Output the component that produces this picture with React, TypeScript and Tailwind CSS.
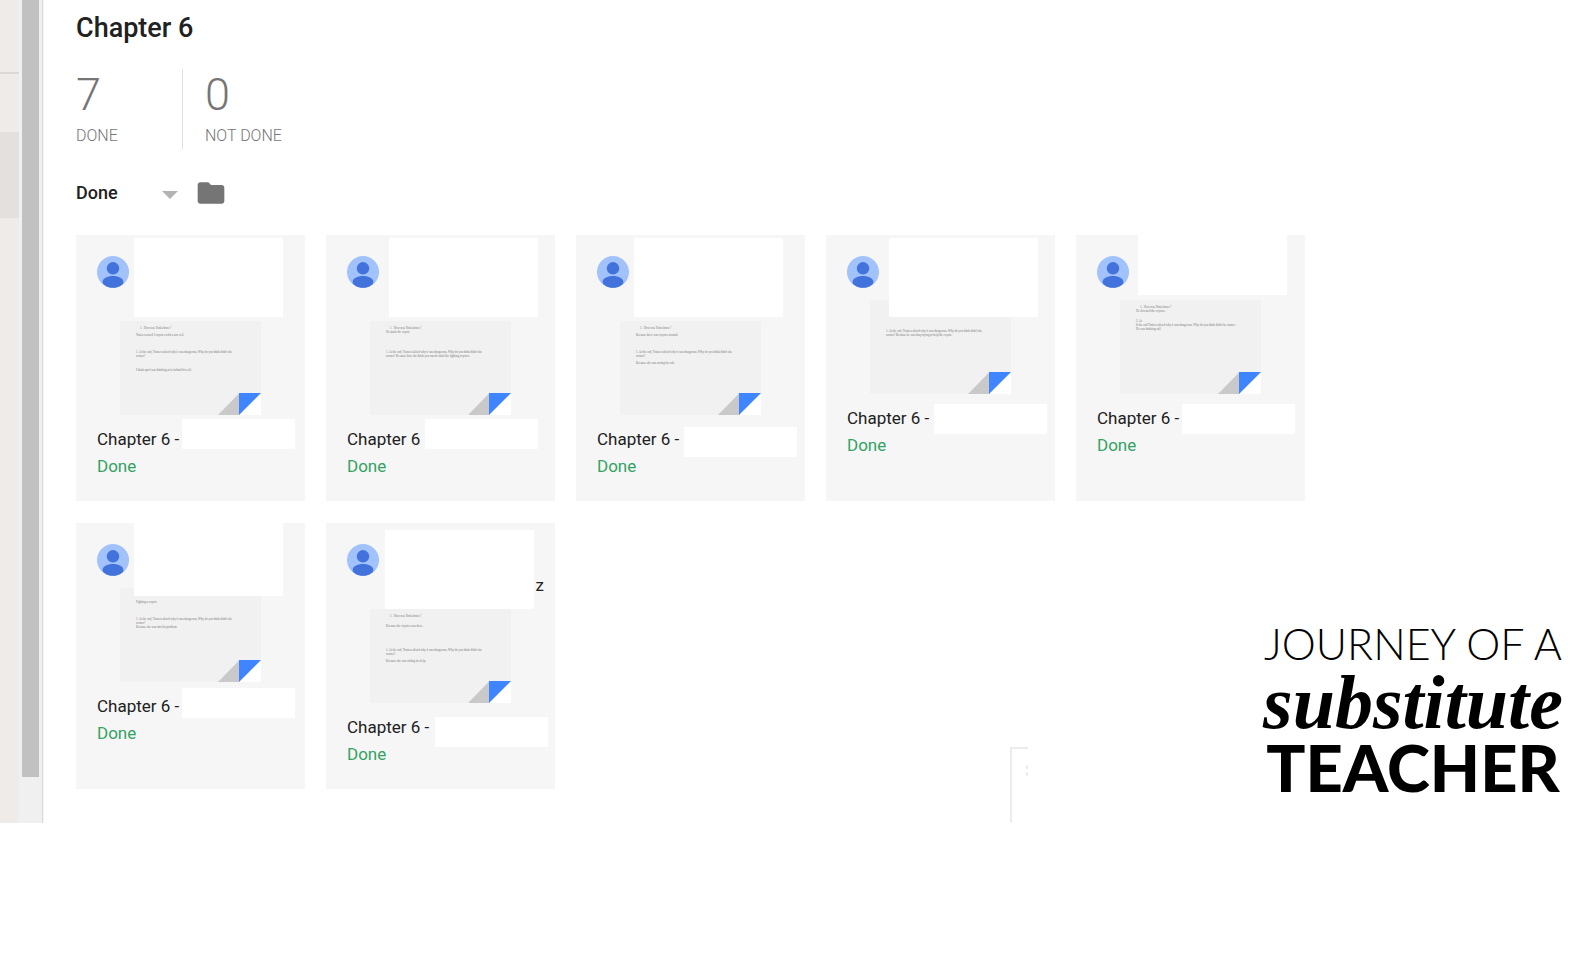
import React from 'react';

interface NoteLine {
  text: string;
  className: string;
}

interface Submission {
  id: number;
  title: string;
  nameLines: 1 | 2;
  nameEnd?: string;
  nameCover: string;
  titleCover: string;
  note: NoteLine[];
}

const question = '1. At the end, Tonia realized why it was dangerous. Why do you think didn\'t she';

const submissions: Submission[] = [
  {
    id: 1,
    title: 'Chapter 6 -',
    nameLines: 2,
    nameCover: 'left-[58px] top-[3px]',
    titleCover: 'left-[106px] top-[184px]',
    note: [
      { text: '1.  How was Tonia brave?', className: 'pl-1' },
      { text: 'Tonia rescued 3 coyotes with a raw cell.', className: 'mt-[3px]' },
      { text: question, className: 'mt-[13px]' },
      { text: 'sooner?', className: '' },
      { text: 'I think spoil was thinking at to behind his cell.', className: 'mt-[10px]' },
    ],
  },
  {
    id: 2,
    title: 'Chapter 6',
    nameLines: 2,
    nameCover: 'left-[63px] top-[3px]',
    titleCover: 'left-[99px] top-[184px]',
    note: [
      { text: '1.  How was Tonia brave?', className: 'pl-1' },
      { text: 'He made the coyote', className: '' },
      { text: question, className: 'mt-[16px]' },
      { text: 'sooner? Because how she think you can do stuff like fighting coyotes.', className: '' },
    ],
  },
  {
    id: 3,
    title: 'Chapter 6 -',
    nameLines: 2,
    nameCover: 'left-[58px] top-[3px]',
    titleCover: 'left-[108px] top-[192px]',
    note: [
      { text: '1.  How was Tonia brave?', className: 'pl-1' },
      { text: 'Because there was coyotes around.', className: 'mt-[3px]' },
      { text: question, className: 'mt-[13px]' },
      { text: 'sooner?', className: '' },
      { text: 'Because she was saving his cub.', className: 'mt-[3px]' },
    ],
  },
  {
    id: 4,
    title: 'Chapter 6 -',
    nameLines: 1,
    nameCover: 'left-[63px] top-[3px]',
    titleCover: 'left-[108px] top-[169px]',
    note: [
      { text: question, className: 'mt-[24px]' },
      { text: 'sooner? Because he was busy trying to help the coyote.', className: '' },
    ],
  },
  {
    id: 5,
    title: 'Chapter 6 -',
    nameLines: 1,
    nameCover: 'left-[62px] -top-[19px]',
    titleCover: 'left-[106px] top-[169px]',
    note: [
      { text: '1.  How was Tonia brave?', className: 'pl-1' },
      { text: 'He defeated the coyotes.', className: '' },
      { text: '2. At', className: 'mt-[6px]' },
      { text: 'It the end Tonia realized why it was dangerous. Why do you think didn\'t he sooner.', className: '' },
      { text: 'He was thinking call', className: '' },
    ],
  },
  {
    id: 6,
    title: 'Chapter 6 -',
    nameLines: 1,
    nameCover: 'left-[58px] -top-[6px]',
    titleCover: 'left-[106px] top-[165px]',
    note: [
      { text: 'Fighting a coyote', className: 'mt-[7px]' },
      { text: question, className: 'mt-[13px]' },
      { text: 'sooner?', className: '' },
      { text: 'Because she was into his problem.', className: '' },
    ],
  },
  {
    id: 7,
    title: 'Chapter 6 -',
    nameLines: 2,
    nameEnd: 'z',
    nameCover: 'left-[59px] top-[7px]',
    titleCover: 'left-[109px] top-[194px]',
    note: [
      { text: '1.  How was Tonia brave?', className: 'pl-1' },
      { text: 'Because the coyotes was there.', className: 'mt-[6px]' },
      { text: question, className: 'mt-[20px]' },
      { text: 'sooner?', className: '' },
      { text: 'Because she was calling for help.', className: 'mt-[3px]' },
    ],
  },
];

const Avatar: React.FC = () => (
  <svg viewBox="0 0 32 32" className="size-8 shrink-0" aria-hidden="true">
    <circle cx="16" cy="16" r="16" fill="#a1c2fa" />
    <circle cx="16" cy="12.3" r="6.2" fill="#4272db" />
    <path d="M5.600 26.200c0-3.900 4.700-6.200 10.400-6.200s10.400 2.300 10.400 6.200c0 2.500-5 5.600-10.400 5.600s-10.400-3.100-10.400-5.600z" fill="#4272db" />
  </svg>
);

const PageCorner: React.FC = () => (
  <svg viewBox="0 0 43 22" className="absolute right-0 bottom-0 h-[22px] w-[43px]" aria-hidden="true">
    <path d="M21 22H43V0z" fill="#fff" />
    <path d="M0 22L21.500 0V22z" fill="#c9c9c9" />
    <path d="M21 0H43L21 22z" fill="#3f85ff" />
  </svg>
);

const SubmissionCard: React.FC<{ item: Submission }> = ({ item }) => (
  <li className="relative h-[266px] bg-[#f6f6f6]">
    <div className={item.nameLines === 2 ? 'flex h-[86px] px-[21px] pt-[21px]' : 'flex h-[65px] px-[21px] pt-[21px]'}>
      <Avatar />
      {item.nameEnd && (
        <span className="-mr-[10px] mb-[14px] ml-auto self-end text-[17px] leading-[20px]">{item.nameEnd}</span>
      )}
    </div>

    <div className="relative mx-auto h-[94px] w-[141px] overflow-hidden bg-[#f1f1f1] pt-[5px] pl-4 font-['Liberation_Serif',serif] text-[3px] leading-[4px] text-[#777]">
      {item.note.map((line, idx) => (
        <p key={idx} className={`whitespace-pre ${line.className}`}>{line.text}</p>
      ))}
      <PageCorner />
    </div>

    <div className="px-[21px] pt-[11px] text-[17px] leading-[27px]">
      <a href="#" className="block">{item.title}</a>
      <p className="text-[#34a263]">Done</p>
    </div>

    <span className={`absolute h-[79px] w-[149px] bg-white ${item.nameCover}`} />
    <span className={`absolute h-[30px] w-[113px] bg-white ${item.titleCover}`} />
  </li>
);

const Sidebar: React.FC = () => (
  <div className="flex w-11 shrink-0">
    <div className="flex w-[19px] flex-col bg-[#eeebe8]">
      <div className="h-[74px] border-b-2 border-[#dbd8d6]" />
      <div className="mt-[58px] h-[86px] bg-[#e3e0de]" />
    </div>
    <div className="w-[23px] bg-[#f0f0f0] pl-[3px]">
      <div className="h-[777px] w-[17px] bg-[#c1c1c1]" />
    </div>
    <div className="w-px bg-[#dadada]" />
    <div className="w-px bg-[#f5f5f5]" />
  </div>
);

const BrandMark: React.FC = () => (
  <div className="absolute right-8 bottom-[26px] flex w-[294px] flex-col items-center font-['Lato',sans-serif] whitespace-nowrap text-black">
    <span className="text-[43px] leading-[46px] font-light">JOURNEY OF A</span>
    <span className="font-['Liberation_Serif',serif] text-[76px] leading-[70px] font-bold italic">substitute</span>
    <span className="text-[65px] leading-[60px] font-black">TEACHER</span>
  </div>
);

const App: React.FC = () => {
  return (
    <div className="min-h-screen bg-white font-['Roboto',sans-serif] text-[#212121]">
      <div className="relative flex">
        <Sidebar />

        <main className="flex-1 pt-[10px] pr-[76px] pb-[34px] pl-8">
          <h1 className="text-[27px] leading-[36px] font-medium">Chapter 6</h1>

          <div className="mt-[23px] flex font-light text-[#757575]">
            <div className="h-20 w-[107px] border-r border-[#e0e0e0]">
              <p className="text-[45px] leading-[52px]">7</p>
              <p className="text-[16px] leading-[30px]">DONE</p>
            </div>
            <div className="pl-[22px]">
              <p className="text-[45px] leading-[52px]">0</p>
              <p className="text-[16px] leading-[30px]">NOT DONE</p>
            </div>
          </div>

          <div className="my-[26px] flex h-8 items-center">
            <div className="relative w-[102px]">
              <select
                aria-label="Filter by status"
                defaultValue="Done"
                className="block w-full appearance-none bg-transparent text-[18px] leading-[32px] font-medium"
              >
                <option>Done</option>
                <option>Not done</option>
              </select>
              <svg viewBox="0 0 16 8" className="pointer-events-none absolute top-[14px] right-0 h-2 w-4" aria-hidden="true">
                <path d="M0 0h16L8 8z" fill="#b3b3b3" />
              </svg>
            </div>
            <button type="button" aria-label="Open folder" className="ml-[17px]">
              <svg viewBox="0 0 24 24" className="size-8" fill="#757575" aria-hidden="true">
                <path d="M10 4H4c-1.100 0-2 .9-2 2v12c0 1.100.9 2 2 2h16c1.100 0 2-.9 2-2V8c0-1.100-.9-2-2-2h-8z" />
              </svg>
            </button>
          </div>

          <ul className="grid grid-cols-[repeat(auto-fill,229px)] gap-x-[21px] gap-y-[22px]">
            {submissions.map((item) => (
              <SubmissionCard key={item.id} item={item} />
            ))}
          </ul>
        </main>

        <div className="absolute right-[564px] bottom-0 flex h-[76px] w-[18px] justify-end border-t-2 border-l-2 border-[#ececec] pt-4">
          <span className="h-[11px] w-[2px] border-y-4 border-[#ececec]" />
        </div>

        <BrandMark />
      </div>
    </div>
  );
};

export default App;
